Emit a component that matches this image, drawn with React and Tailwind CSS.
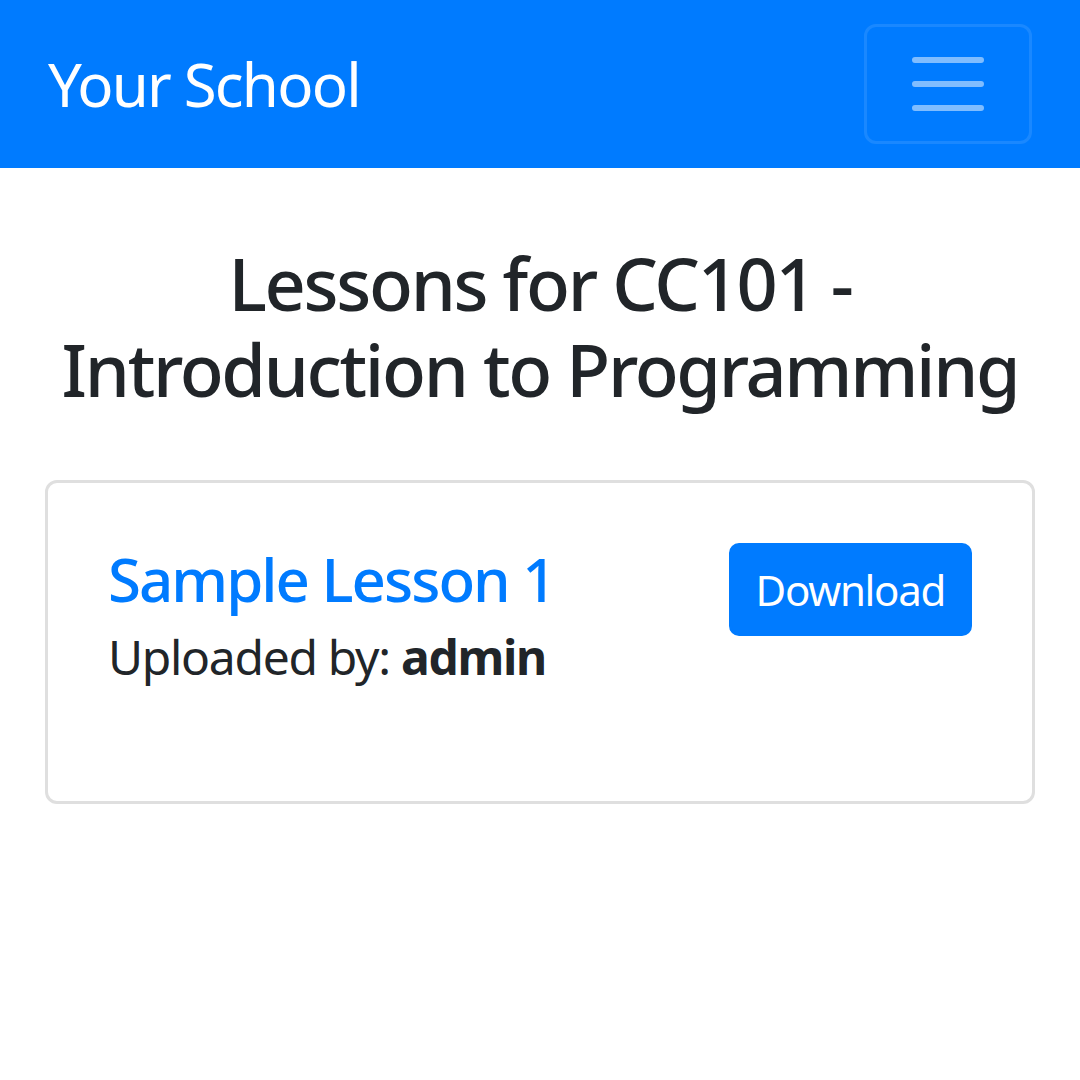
export default function App() {
  const font = { fontFamily: '"Noto Sans", "Open Sans", sans-serif' };
  return (
    <div className="min-h-[1080px] bg-white text-[#212529]" style={font}>
      <nav className="flex h-[168px] items-center justify-between bg-[#007bff] px-[48px]">
        <a className="pt-[15px] pb-[15px] text-[60px] leading-[90px] tracking-[-1.8px] text-white">Your School</a>
        <button className="flex h-[120px] w-[168px] items-center justify-center rounded-[12px] border-[3px] border-white/10">
          <svg width="90" height="90" viewBox="0 0 30 30">
            <path d="M4 7h22M4 15h22M4 23h22" stroke="rgba(255,255,255,0.5)" strokeWidth="2" strokeLinecap="round" />
          </svg>
        </button>
      </nav>
      <main className="px-[45px]">
        <h4 className="mt-[72px] mb-[67px] text-center text-[72px] font-medium leading-[1.2] tracking-[-2.3px]">
          <span className="block whitespace-nowrap">Lessons for CC101 -</span>
          <span className="block whitespace-nowrap">Introduction to Programming</span>
        </h4>
        <div className="rounded-[12px] border-[3px] border-[#dfdfdf] p-[60px]">
          <div className="flex items-start justify-between">
            <div>
              <h5 className="mb-[6px] text-[60px] font-medium leading-[1.2] tracking-[-2px] text-[#007bff]">Sample Lesson 1</h5>
              <p className="mb-[48px] text-[48px] leading-[1.5] tracking-[-1.3px]">
                Uploaded by: <b className="font-bold">admin</b>
              </p>
            </div>
            <button className="rounded-[10px] border-[3px] border-[#007bff] bg-[#007bff] px-[24px] py-[12px] text-[42px] leading-[1.5] tracking-[-1.3px] text-white">
              Download
            </button>
          </div>
        </div>
      </main>
    </div>
  );
}
